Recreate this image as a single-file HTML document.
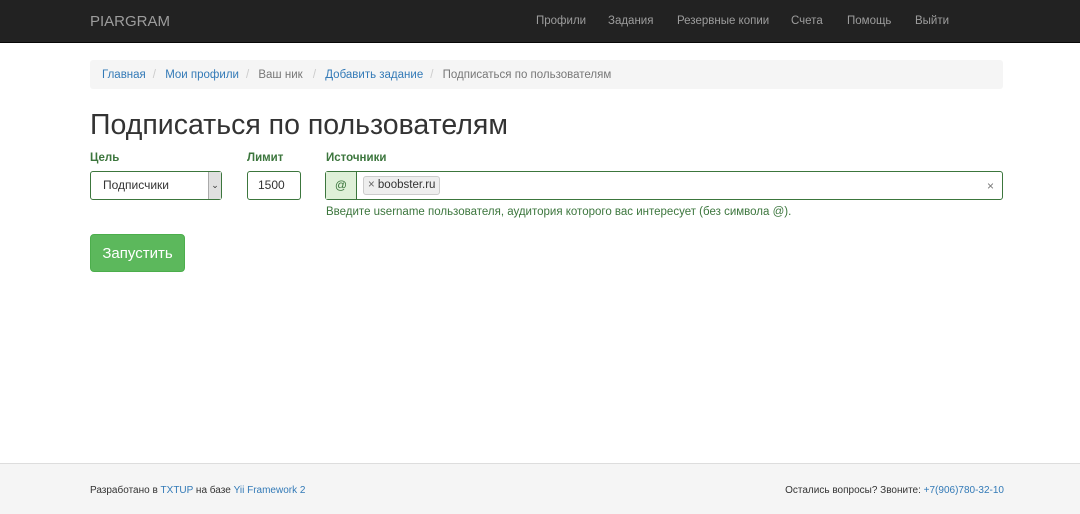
<!DOCTYPE html>
<html><head><meta charset="utf-8"><style>
*{box-sizing:border-box}
body{margin:0;width:1080px;height:514px;font-family:"Liberation Sans",sans-serif;font-size:12px;color:#333;background:#fff;position:relative;overflow:hidden}
.nav{position:absolute;left:0;top:0;width:1080px;height:43px;background:#222;border-bottom:1px solid #080808}
.brand{position:absolute;left:90px;top:13px;font-size:15px;color:#9d9d9d}
.nav a{position:absolute;top:15px;color:#9d9d9d;font-size:11.5px;text-decoration:none}
.bc{position:absolute;left:90px;top:60px;width:913px;height:29px;background:#f5f5f5;border-radius:3px;padding:9px 12px;font-size:11.5px;color:#777;white-space:nowrap}
.bc a{color:#337ab7;text-decoration:none}
.bc .s{color:#ccc;padding:0 6px 0 7px}
h1{position:absolute;left:90px;top:109px;margin:0;font-weight:normal;font-size:28.5px;color:#333}
.lbl{position:absolute;top:152px;font-weight:bold;color:#3c763d;font-size:11.5px}
.box{position:absolute;top:171px;height:29px;border:1px solid #3c763d;border-radius:3px;background:#fff;font-size:12px}
.help{position:absolute;left:326px;top:206px;color:#3c763d;font-size:11.5px}
.btn{position:absolute;left:90px;top:234px;width:95px;height:38px;background:#5cb85c;border:1px solid #4cae4c;border-radius:4px;color:#fff;font-size:15px;text-align:center;line-height:38px}
.foot{position:absolute;left:0;top:463px;width:1080px;height:51px;background:#f5f5f5;border-top:1px solid #ddd;font-size:10px}
.foot a{color:#337ab7;text-decoration:none}
</style></head><body>
<div class="nav"><div class="brand">PIARGRAM</div>
<a style="left:536px">Профили</a><a style="left:608px">Задания</a><a style="left:677px">Резервные копии</a><a style="left:791px">Счета</a><a style="left:847px">Помощь</a><a style="left:915px">Выйти</a></div>
<div class="bc"><a>Главная</a><span class="s">/</span> <a>Мои профили</a><span class="s">/</span> Ваш ник <span class="s">/</span> <a>Добавить задание</a><span class="s">/</span> Подписаться по пользователям</div>
<h1>Подписаться по пользователям</h1>
<div class="lbl" style="left:90px">Цель</div>
<div class="lbl" style="left:247px">Лимит</div>
<div class="lbl" style="left:326px">Источники</div>
<div class="box" style="left:90px;width:132px;padding:6px 12px">Подписчики<div style="position:absolute;right:0;top:0;width:13px;height:27px;background:#e0e0e0;border-left:1px solid #aaa;font-size:9px;text-align:center;line-height:27px">&#8964;</div></div>
<div class="box" style="left:247px;width:54px;padding:6px 10px">1500</div>
<div class="box" style="left:325px;width:678px">
<div style="position:absolute;left:0;top:0;width:31px;height:27px;background:#dff0d8;border-right:1px solid #3c763d;color:#3c763d;text-align:center;line-height:27px">@</div>
<div style="position:absolute;left:37px;top:4px;height:19px;background:#eee;border:1px solid #ccc;border-radius:3px;padding:2px 4px;font-size:11.5px"><span style="color:#666">×</span> boobster.ru</div>
<div style="position:absolute;right:8px;top:7px;color:#777;font-size:12px">×</div></div>
<div class="help">Введите username пользователя, аудитория которого вас интересует (без символа @).</div>
<div class="btn">Запустить</div>
<div class="foot"><div style="position:absolute;left:90px;top:21px">Разработано в <a>TXTUP</a> на базе <a>Yii Framework 2</a></div>
<div style="position:absolute;right:76px;top:21px">Остались вопросы? Звоните: <a>+7(906)780-32-10</a></div></div>
</body></html>
